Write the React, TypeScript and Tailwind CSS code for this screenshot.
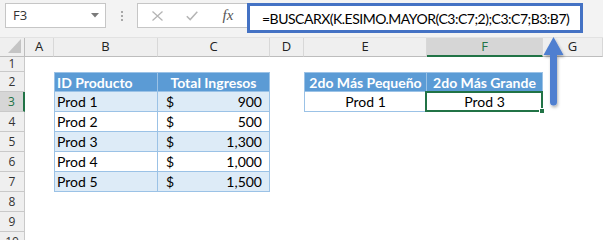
import React from "react";

const rowHdr =
  "flex items-center justify-center border-b border-r border-[#c9c9c9] bg-[#efefef] text-[12px] text-[#333] font-['Open_Sans',sans-serif]";
const rowHdrSel =
  "flex items-center justify-center border-b border-b-[#c9c9c9] border-r-2 border-r-[#217346] bg-[#d6d6d6] text-[12px] text-[#217346] font-['Open_Sans',sans-serif]";
const colHdr =
  "flex items-center justify-center border-b border-b-[#bdbdbd] border-r border-r-[#d8d8d8] bg-[#efefef] text-[13px] text-[#222] font-['Open_Sans',sans-serif]";
const colHdrSel =
  "flex items-center justify-center border-b-2 border-b-[#217346] border-r border-r-[#d8d8d8] bg-[#d6d6d6] text-[13px] text-[#217346] font-['Open_Sans',sans-serif]";

const cellText = "text-[14px] leading-[20px] text-black font-['Lato',sans-serif]";

const prods = [
  { id: "Prod 1", v: "900", band: true },
  { id: "Prod 2", v: "500", band: false },
  { id: "Prod 3", v: "1,300", band: true },
  { id: "Prod 4", v: "1,000", band: false },
  { id: "Prod 5", v: "1,500", band: true },
];

function Empty() {
  return <div className="bg-white" />;
}

export default function App() {
  const cols = ["A", "B", "C", "D", "E", "F", "G"];
  return (
    <div className="relative w-[603px] h-[240px] overflow-hidden bg-white">
      {/* Top bar */}
      <div className="flex h-[38px] items-start bg-[#f3f3f3] pl-[5px] pt-[3px] border-b border-[#e2e2e2]">
        <div className="flex h-[25px] w-[101px] items-center justify-between border border-[#c6c6c6] bg-white pl-[7px] pr-[6px]">
          <span className="text-[13px] text-[#333] font-['Open_Sans',sans-serif]">F3</span>
          <svg width="8" height="5" viewBox="0 0 8 5">
            <path d="M0 0 L8 0 L4 4.5 Z" fill="#7a7a7a" />
          </svg>
        </div>
        <div className="flex h-[25px] w-[31px] flex-col items-center justify-center gap-[2px]">
          <div className="h-[2px] w-[2px] bg-[#a8a8a8]" />
          <div className="h-[2px] w-[2px] bg-[#a8a8a8]" />
          <div className="h-[2px] w-[2px] bg-[#a8a8a8]" />
        </div>
        <div className="flex h-[25px] w-[110px] items-center border-y border-l border-[#c6c6c6] bg-white">
          <div className="flex w-[36px] justify-center pl-[2px]">
            <svg width="11" height="10" viewBox="0 0 11 10">
              <path d="M0.5 0.5 L10.5 9.5 M10.5 0.5 L0.5 9.5" stroke="#b5b5b5" strokeWidth="1.3" fill="none" />
            </svg>
          </div>
          <div className="flex w-[36px] justify-center">
            <svg width="12" height="10" viewBox="0 0 12 10">
              <path d="M0.8 5.2 L4.2 8.6 L11.3 0.8" stroke="#b5b5b5" strokeWidth="1.5" fill="none" />
            </svg>
          </div>
          <div className="flex w-[36px] justify-center">
            <span className="text-[15px] italic text-[#555] font-['Liberation_Serif',serif]">fx</span>
          </div>
        </div>
        <div className="flex h-[30px] w-[336px] items-center border-[3px] border-[#4472c4] bg-white pl-[12px]">
          <span className="text-[14px] tracking-[-0.5px] text-black font-['Lato',sans-serif] whitespace-nowrap">
            =BUSCARX(K.ESIMO.MAYOR(C3:C7;2);C3:C7;B3:B7)
          </span>
        </div>
      </div>

      {/* Grid */}
      <div className="grid grid-cols-[25px_29px_104px_112px_34px_123px_116px_60px] grid-rows-[19px_15px_repeat(9,20px)]">
        {/* header row */}
        <div className="relative border-b border-r border-[#bdbdbd] bg-[#efefef]">
          <svg className="absolute bottom-[3px] right-[3px]" width="13" height="14" viewBox="0 0 13 14">
            <path d="M13 0 L13 14 L0 14 Z" fill="#c4c4c4" />
          </svg>
        </div>
        {cols.map((c) => (
          <div key={c} className={c === "F" ? colHdrSel : colHdr}>
            {c}
          </div>
        ))}

        {/* Row 1 */}
        <div className={rowHdr}>1</div>
        <Empty />
        <Empty />
        <Empty />
        <Empty />
        <Empty />
        <Empty />
        <Empty />

        {/* Row 2 */}
        <div className={rowHdr}>2</div>
        <Empty />
        <div className={`${cellText} border border-[#9bc2e6] bg-[#5b9bd5] pl-[2px] font-bold text-white`}>
          <span className="text-white">ID Producto</span>
        </div>
        <div className={`${cellText} border-y border-r border-[#9bc2e6] bg-[#5b9bd5] text-center font-bold`}>
          <span className="text-white">Total Ingresos</span>
        </div>
        <Empty />
        <div className={`${cellText} border border-[#9bc2e6] bg-[#5b9bd5] text-center font-bold`}>
          <span className="text-white">2do Más Pequeño</span>
        </div>
        <div className={`${cellText} border-y border-r border-[#9bc2e6] bg-[#5b9bd5] text-center font-bold`}>
          <span className="text-white">2do Más Grande</span>
        </div>
        <Empty />

        {/* Rows 3-7 */}
        {prods.map((p, i) => {
          const r = i + 3;
          const bg = p.band ? "bg-[#ddebf7]" : "bg-white";
          return (
            <React.Fragment key={p.id}>
              <div className={r === 3 ? rowHdrSel : rowHdr}>{r}</div>
              <Empty />
              <div className={`${cellText} ${bg} border-x border-b border-[#9bc2e6] pl-[2px]`}>{p.id}</div>
              <div className={`${cellText} ${bg} flex justify-between border-r border-b border-[#9bc2e6] pl-[8px] pr-[7px]`}>
                <span>$</span>
                <span>{p.v}</span>
              </div>
              <Empty />
              {r === 3 ? (
                <>
                  <div className={`${cellText} border-x border-b border-[#9bc2e6] bg-white text-center`}>Prod 1</div>
                  <div className={`${cellText} relative border-r border-b border-[#9bc2e6] bg-white text-center`}>
                    Prod 3
                    <div className="absolute -left-[2px] -top-[1px] -right-[1px] -bottom-[1px] border-2 border-[#217346]" />
                    <div className="absolute -bottom-[3px] -right-[3px] h-[6px] w-[6px] border border-white bg-[#217346]" />
                  </div>
                </>
              ) : (
                <>
                  <Empty />
                  <Empty />
                </>
              )}
              <Empty />
            </React.Fragment>
          );
        })}

        {/* Rows 8-10 */}
        {[8, 9, 10].map((r) => (
          <React.Fragment key={r}>
            <div className={rowHdr}>{r}</div>
            <Empty />
            <Empty />
            <Empty />
            <Empty />
            <Empty />
            <Empty />
            <Empty />
          </React.Fragment>
        ))}
      </div>

      {/* Arrow annotation */}
      <svg className="absolute left-[538px] top-[34px]" width="32" height="78" viewBox="0 0 32 78">
        <defs>
          <filter id="sh" x="-50%" y="-20%" width="200%" height="140%">
            <feDropShadow dx="1" dy="2" stdDeviation="1.5" floodColor="#000" floodOpacity="0.3" />
          </filter>
        </defs>
        <g filter="url(#sh)">
          <path d="M15.5 3 L25.5 21 L19 21 L19 68 Q19 71.5 15.5 71.5 Q12 71.5 12 68 L12 21 L5.5 21 Z" fill="#4f7fd0" />
        </g>
      </svg>
    </div>
  );
}
